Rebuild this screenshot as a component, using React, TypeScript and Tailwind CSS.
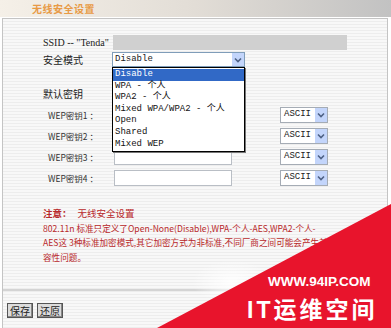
import React from 'react';

const modes = ['Disable', 'WPA - 个人', 'WPA2 - 个人', 'Mixed WPA/WPA2 - 个人', 'Open', 'Shared', 'Mixed WEP'];

function Arrow() {
  return (
    <div className="w-[13px] h-full bg-[#c3d5fb] flex items-center justify-center border-l border-white">
      <svg width="8" height="6" viewBox="0 0 8 6">
        <path d="M1 1.5 L4 4.5 L7 1.5" fill="none" stroke="#4d6185" strokeWidth="1.6" />
      </svg>
    </div>
  );
}

function AsciiSelect() {
  return (
    <div className="w-[48px] h-[16px] border border-[#a5acb5] bg-white flex items-center">
      <span className="flex-1 pl-[3px] font-['Liberation_Mono',monospace] text-[9px] text-[#222]">ASCII</span>
      <Arrow />
    </div>
  );
}

function WepRow({ n, first }: { n: number; first?: boolean }) {
  return (
    <div className={`flex items-center h-[16px] ${first ? '' : 'mt-[5px]'}`}>
      <span className="w-[71px] pl-[5px] text-[8.5px] text-[#333] whitespace-nowrap">WEP密钥{n} ：</span>
      <div className="w-[118px] h-[16px] border border-[#b9bec5] bg-white" />
      <div className="ml-[48px]">
        <AsciiSelect />
      </div>
    </div>
  );
}

export default function App() {
  return (
    <div className="relative w-[391px] h-[328px] overflow-hidden bg-white font-['Noto_Sans_CJK_SC',sans-serif] text-[10px] text-[#222]">
      {/* Header */}
      <div className="h-[17px] bg-gradient-to-r from-[#f5f0e8] via-[#e2ddd6] to-[#c2c2c2] pl-[32px] flex items-center">
        <span className="text-[10px] font-bold text-[#e89a45] tracking-[0.5px]">无线安全设置</span>
      </div>

      {/* Body */}
      <div className="mt-px ml-[2px] mr-[3px] h-[310px] border-l border-r border-t border-[#c4c4c4] bg-[image:repeating-linear-gradient(to_bottom,#f8f8f8_0px,#f8f8f8_2px,#ededed_2px,#ededed_3px)]">
        <div className="pl-[40px] pt-[16px]">
          {/* SSID */}
          <div className="flex items-center h-[15px]">
            <span className="w-[70px] font-['Liberation_Serif',serif] text-[10px] whitespace-nowrap">SSID -- "Tenda"</span>
            <div className="w-[234px] h-[15px] bg-[#d0d0d0]" />
          </div>

          {/* Security mode */}
          <div className="flex items-center h-[15px] mt-[2px]">
            <span className="w-[69px]">安全模式</span>
            <div className="relative w-[133px] h-[15px] border border-[#7f9db9] bg-white flex items-center">
              <span className="flex-1 pl-[2px] font-['Liberation_Mono',monospace] text-[9px]">Disable</span>
              <Arrow />
              <div className="absolute left-[-1px] top-[14px] w-[133px] z-10 border border-black bg-white shadow-[1px_1px_0_#777] py-[1px] font-['Liberation_Mono','Noto_Sans_CJK_SC',monospace] text-[9px]">
                {modes.map((m, i) => (
                  <div
                    key={i}
                    className={`h-[11.6px] leading-[11.6px] pl-[2px] whitespace-nowrap ${i === 0 ? 'bg-[#3169c6] text-white' : 'text-[#111]'}`}
                  >
                    {m}
                  </div>
                ))}
              </div>
            </div>
          </div>

          {/* Default key */}
          <div className="flex items-center h-[15px] mt-[19px]">
            <span>默认密钥</span>
          </div>

          <div className="mt-[6px]">
            <WepRow n={1} first />
            <WepRow n={2} />
            <WepRow n={3} />
            <WepRow n={4} />
          </div>

          {/* Notice */}
          <div className="mt-[20px] text-[#b8282a] text-[9.5px] leading-[14.6px] whitespace-nowrap">
            <div>
              <span className="font-bold">注意：</span>
              <span className="ml-[6px]">无线安全设置</span>
            </div>
            <div className="text-[8.6px]">802.11n 标准只定义了Open-None(Disable),WPA-个人-AES,WPA2-个人-</div>
            <div className="text-[8.6px]">AES这 3种标准加密模式,其它加密方式为非标准,不同厂商之间可能会产生兼</div>
            <div className="text-[8.6px]">容性问题。</div>
          </div>
        </div>

        {/* Footer */}
        <div className="mt-[25px] border-t-2 border-[#d4d4d4]" />
        <div className="flex gap-[4px] pl-[4px] pt-[12px]">
          <button className="h-[15px] px-[2px] border border-[#555] bg-[#dcdcdc] text-[10px] leading-[13px] shadow-[inset_-1px_-1px_0_#888]">保存</button>
          <button className="h-[15px] px-[2px] border border-[#555] bg-[#dcdcdc] text-[10px] leading-[13px] shadow-[inset_-1px_-1px_0_#888]">还原</button>
        </div>
      </div>

      {/* Watermark */}
      <svg className="absolute inset-0 pointer-events-none" width="391" height="328" viewBox="0 0 391 328">
        <defs>
          <radialGradient id="glow" cx="0.5" cy="0.5" r="0.5">
            <stop offset="0" stopColor="#ffffff" stopOpacity="0.9" />
            <stop offset="1" stopColor="#ffffff" stopOpacity="0" />
          </radialGradient>
        </defs>
        <ellipse cx="232" cy="282" rx="40" ry="22" fill="url(#glow)" />
        <polygon points="391,204 391,328 157,328" fill="#e8142c" />
      </svg>
      <div className="absolute left-[268px] top-[275px] font-['Liberation_Sans',sans-serif] font-bold text-[13.5px] leading-none text-white">
        WWW.94IP.COM
      </div>
      <div className="absolute left-[247px] top-[299px] font-['Liberation_Sans','Noto_Sans_CJK_SC',sans-serif] font-bold text-[23px] leading-none tracking-[3px] text-white whitespace-nowrap">
        IT运维空间
      </div>
    </div>
  );
}
